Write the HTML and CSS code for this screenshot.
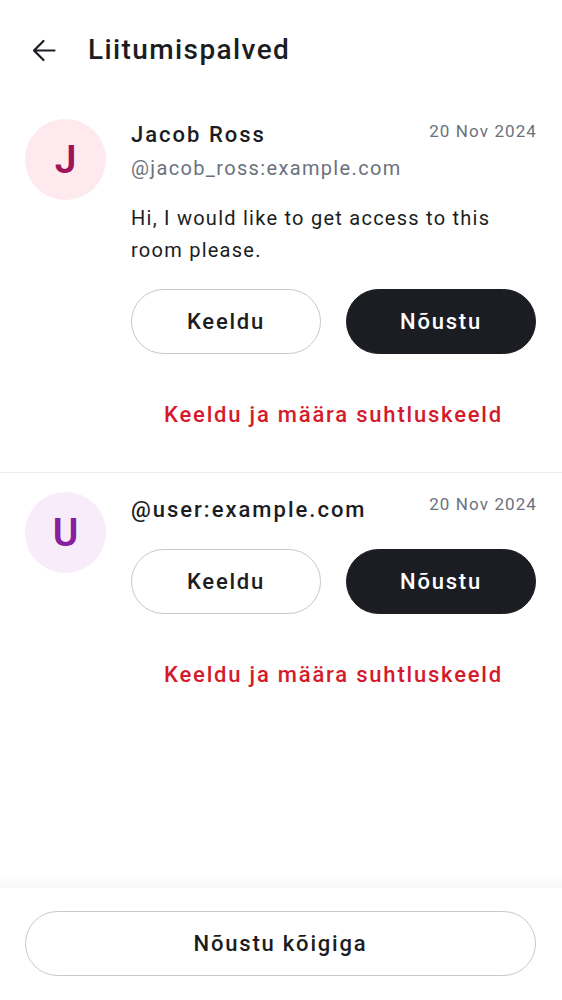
FILE: index.html
```html
<!DOCTYPE html>
<html lang="et">
<head>
<meta charset="utf-8">
<title>Liitumispalved</title>
<link rel="stylesheet" href="styles.css">
</head>
<body>
<div class="screen">
  <header class="topbar">
    <button class="back" aria-label="Tagasi">
      <svg width="24" height="23" viewBox="0 0 24 23" fill="none" stroke="#1b1d22" stroke-width="2.2" stroke-linecap="round" stroke-linejoin="round"><path d="M22.5 11.5H2.5M11.5 2L2 11.5l9.5 9.5"/></svg>
    </button>
    <h1 class="title">Liitumispalved</h1>
  </header>

  <main class="list">
    <section class="request">
      <div class="avatar avatar-pink">J</div>
      <div class="body">
        <div class="head-row">
          <div class="name">Jacob Ross</div>
          <div class="date">20 Nov 2024</div>
        </div>
        <div class="handle">@jacob_ross:example.com</div>
        <p class="message">Hi, I would like to get access to this room please.</p>
        <div class="actions">
          <button class="btn btn-outline">Keeldu</button>
          <button class="btn btn-solid">Nõustu</button>
        </div>
        <button class="link-danger">Keeldu ja määra suhtluskeeld</button>
      </div>
    </section>

    <section class="request">
      <div class="avatar avatar-purple">U</div>
      <div class="body">
        <div class="head-row head-row-single">
          <div class="name">@user:example.com</div>
          <div class="date">20 Nov 2024</div>
        </div>
        <div class="actions actions-loose">
          <button class="btn btn-outline">Keeldu</button>
          <button class="btn btn-solid">Nõustu</button>
        </div>
        <button class="link-danger">Keeldu ja määra suhtluskeeld</button>
      </div>
    </section>
  </main>

  <footer class="footer">
    <div class="footer-fade"></div>
    <div class="footer-inner">
      <button class="btn btn-outline btn-wide">Nõustu kõigiga</button>
    </div>
  </footer>
</div>
</body>
</html>
```

FILE: styles.css
```css
* { box-sizing: border-box; }

html, body {
  margin: 0;
  padding: 0;
  background: #ffffff;
}

body {
  font-family: Roboto, "Noto Sans", "Liberation Sans", sans-serif;
  color: #1b1d22;
}

.screen {
  height: 1000px;
  display: flex;
  flex-direction: column;
}

.topbar {
  height: 100px;
  display: flex;
  align-items: center;
  padding-left: 32px;
}

.back {
  width: 24px;
  height: 23px;
  padding: 0;
  border: 0;
  background: none;
  display: flex;
  margin-top: 1px;
}

.title {
  margin: 0 0 0 32px;
  font-size: 28px;
  font-weight: 500;
  line-height: 36px;
  letter-spacing: 1.4px;
}

.list {
  flex: 1;
}

.request {
  display: flex;
  gap: 25px;
  padding: 19px 26px 25px 25px;
}

.request + .request {
  border-top: 1px solid #e9ebee;
}

.avatar {
  width: 81px;
  height: 81px;
  border-radius: 50%;
  flex: none;
  display: flex;
  align-items: center;
  justify-content: center;
  font-size: 39px;
  font-weight: 600;
}

.avatar-pink {
  background: #fde9ee;
  color: #9c1459;
}

.avatar-purple {
  background: #f8ebfa;
  color: #86209c;
}

.body {
  flex: 1;
  min-width: 0;
}

.head-row {
  display: flex;
  justify-content: space-between;
  align-items: flex-start;
}

.head-row-single .name {
  padding-top: 2px;
}

.name {
  font-size: 22px;
  font-weight: 500;
  line-height: 32px;
  letter-spacing: 2px;
}

.date {
  font-size: 17px;
  line-height: 24px;
  color: #6b727d;
  letter-spacing: 1.1px;
  margin-right: -1px;
}

.handle {
  margin-top: 2px;
  font-size: 20px;
  line-height: 30px;
  color: #6b727d;
  letter-spacing: 1.35px;
}

.message {
  margin: 19px 0 0;
  font-size: 20px;
  line-height: 32px;
  letter-spacing: 1.25px;
}

.actions {
  display: flex;
  gap: 25px;
  margin-top: 23px;
}

.actions-loose {
  margin-top: 23px;
}

.btn {
  flex: 1;
  height: 65px;
  border-radius: 33px;
  font-family: inherit;
  font-size: 22px;
  font-weight: 500;
  letter-spacing: 1.8px;
  cursor: pointer;
}

.btn-outline {
  background: #ffffff;
  border: 1.5px solid #c4c9d1;
  color: #1b1d22;
}

.btn-solid {
  background: #1b1d22;
  border: 1.5px solid #1b1d22;
  color: #ffffff;
}

.link-danger {
  display: block;
  width: 100%;
  height: 65px;
  margin-top: 28px;
  border: 0;
  background: none;
  font-family: inherit;
  font-size: 22px;
  font-weight: 500;
  letter-spacing: 1.8px;
  color: #d51a2b;
}

.footer {
  flex: none;
}

.footer-fade {
  height: 15px;
  background: linear-gradient(to bottom, #ffffff, #f7f7f8);
}

.footer-inner {
  padding: 23px 26px 24px 25px;
  display: flex;
}

.btn-wide {
  width: 100%;
}
```
